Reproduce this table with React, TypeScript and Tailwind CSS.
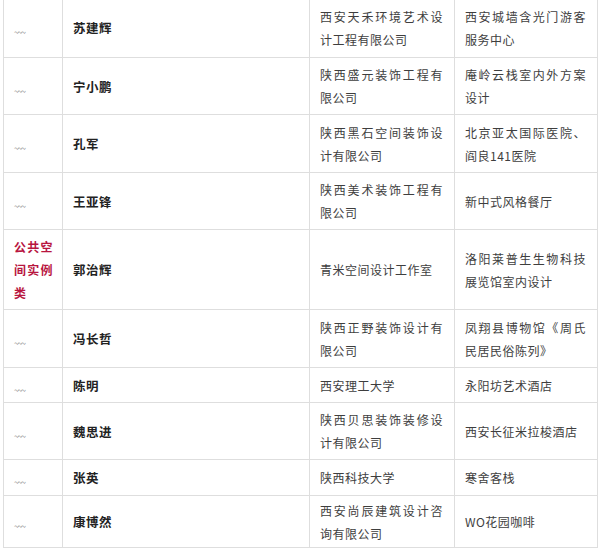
const rows = [
  { h: "h-[60px]", name: "苏建辉", company: "西安天禾环境艺术设计工程有限公司", work: "西安城墙含光门游客服务中心" },
  { h: "h-[57px]", name: "宁小鹏", company: "陕西盛元装饰工程有限公司", work: "庵岭云栈室内外方案设计" },
  { h: "h-[58px]", name: "孔军", company: "陕西黑石空间装饰设计有限公司", work: "北京亚太国际医院、阎良141医院" },
  { h: "h-[57px]", name: "王亚锋", company: "陕西美术装饰工程有限公司", work: "新中式风格餐厅" },
  { h: "h-[80px]", name: "郭治辉", company: "青米空间设计工作室", work: "洛阳莱普生生物科技展览馆室内设计", category: "公共空间实例类" },
  { h: "h-[58px]", name: "冯长哲", company: "陕西正野装饰设计有限公司", work: "凤翔县博物馆《周氏民居民俗陈列》" },
  { h: "h-[35px]", name: "陈明", company: "西安理工大学", work: "永阳坊艺术酒店" },
  { h: "h-[57px]", name: "魏思进", company: "陕西贝思装饰装修设计有限公司", work: "西安长征米拉梭酒店" },
  { h: "h-[36px]", name: "张英", company: "陕西科技大学", work: "寒舍客栈" },
  { h: "h-[52px]", name: "康博然", company: "西安尚辰建筑设计咨询有限公司", work: "WO花园咖啡" },
];

export default function App() {
  return (
    <div className="w-[600px] h-[552px] overflow-hidden bg-white font-['Noto_Sans_CJK_SC','Noto_Sans',sans-serif]">
      <table className="ml-[3px] mt-[-3px] w-[594px] table-fixed border-collapse text-[12px] leading-[23px] tracking-[0.5px] text-[#3e3e3e]">
        <colgroup>
          <col className="w-[59px]" />
          <col className="w-[247px]" />
          <col className="w-[145px]" />
          <col className="w-[143px]" />
        </colgroup>
        <tbody>
          {rows.map((r) => (
            <tr key={r.name} className={r.h}>
              {/* category / placeholder */}
              <td className="border border-[#dedede] pl-[10px] pr-[9px] align-middle text-justify">
                {r.category ? (
                  <span className="font-bold text-[#b8163f] tracking-[0.5px]">{r.category}</span>
                ) : (
                  <span className="relative top-[4px] text-[9px] tracking-[-1.5px] text-[#8a8a8a]">~~~</span>
                )}
              </td>
              <td className="border border-[#dedede] px-[10px] align-middle font-bold text-[12.5px] text-[#222]">
                {r.name}
              </td>
              <td className="border border-[#dedede] pl-[10px] pr-[11px] align-middle text-justify">{r.company}</td>
              <td className="border border-[#dedede] pl-[10px] pr-[11px] align-middle text-justify">{r.work}</td>
            </tr>
          ))}
        </tbody>
      </table>
    </div>
  );
}
